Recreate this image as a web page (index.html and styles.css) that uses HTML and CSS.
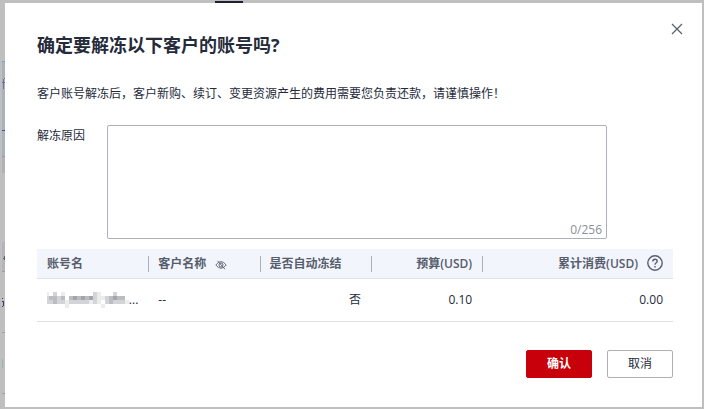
FILE: index.html
```html
<!DOCTYPE html>
<html lang="zh-CN">
<head>
    <meta charset="UTF-8">
    <meta name="viewport" content="width=device-width, initial-scale=1.0">
    <title>解冻客户账号</title>
    <link rel="stylesheet" href="styles.css">
</head>
<body>

    <!-- Page behind the dialog -->
    <svg class="backdrop" width="250" height="409" aria-hidden="true" shape-rendering="crispEdges">
        <rect x="215" y="1" width="28" height="2" fill="#1d2030"/>
        <rect x="2" y="61" width="3" height="96" fill="#a8b3be"/>
        <rect x="2" y="61" width="3" height="1" fill="#8c9cc8"/>
        <rect x="2" y="130" width="3" height="1" fill="#3c55b4"/>
        <rect x="2" y="156" width="3" height="1" fill="#8c9cc8"/>
        <rect x="2" y="157" width="3" height="16" fill="#b2b2b2"/>
        <path d="M3 79h1v10h-1zM4 78h1v1h-1zM2 82h3v1h-3z" fill="#7b6a9c"/>
        <rect x="2" y="242" width="3" height="29" fill="#b3b4bd"/>
        <rect x="2" y="271" width="3" height="1" fill="#9c9da6"/>
        <path d="M4 256h1v4h-1zM3 258h1v1h-1z" fill="#5d6070"/>
        <path d="M2 298h1v1h-1zM2 301h2v1h-2zM3 302h1v4h-1zM2 306h1v1h-1z" fill="#39415c"/>
        <rect x="2" y="332" width="3" height="1" fill="#9c9da6"/>
        <rect x="2" y="359" width="1" height="9" fill="#8ebab4"/>
        <rect x="2" y="393" width="3" height="1" fill="#9c9da6"/>
    </svg>

    <!-- Unfreeze Dialog -->
    <form class="dialog" role="dialog" aria-labelledby="title">
        <button type="button" class="close" aria-label="关闭">
            <svg width="12" height="12" viewBox="0 0 12 12"><path d="M1 1L11 11M11 1L1 11" fill="none" stroke="#575d6c" stroke-width="1.200"/></svg>
        </button>

        <h1 id="title">确定要解冻以下客户的账号吗?</h1>
        <p class="tip">客户账号解冻后，客户新购、续订、变更资源产生的费用需要您负责还款，请谨慎操作！</p>

        <div class="field">
            <label for="reason">解冻原因</label>
            <div class="reason-box">
                <textarea id="reason" maxlength="256"></textarea>
                <span class="counter">0/256</span>
            </div>
        </div>

        <table>
            <colgroup>
                <col class="col"><col class="col"><col class="col"><col class="col"><col>
            </colgroup>
            <thead>
                <tr>
                    <th>账号名</th>
                    <th>
                        <span class="head">客户名称
                            <svg width="12" height="12" viewBox="0 0 12 12" fill="none" stroke="#575d6c" stroke-width="0.900"><path d="M.800 7Q6 .200 11.200 7Q6 13.500 .800 7ZM2.500 2.800L10 11.200"/><circle cx="6" cy="7" r="2"/></svg>
                        </span>
                    </th>
                    <th>是否自动冻结</th>
                    <th class="num">预算(USD)</th>
                    <th class="num">
                        <span class="head">累计消费(USD)
                            <svg width="16" height="18" viewBox="0 0 16 18" fill="none" stroke="#575d6c" stroke-width="1.400"><circle cx="8" cy="8" r="7.200"/><path d="M5.800 6.500Q5.800 4.300 8 4.300T10.200 6.300Q10.200 7.300 9 8Q8 8.600 8 9.800M8 11V12.500"/></svg>
                        </span>
                    </th>
                </tr>
            </thead>
            <tbody>
                <tr>
                    <td>
                        <span class="account">
                            <!-- masked account name -->
                            <svg width="82" height="16" viewBox="2 0 82 16" role="img" aria-label="账号名已隐藏" shape-rendering="crispEdges">
                                <path d="M0 0h4v4h-4zM16 0h4v4h-4zM52 0h4v12h-4zM56 4h4v4h-4zM20 8h4v4h-4zM20 12h4v4h-4zM56 12h4v4h-4zM44 8h4v4h-4zM80 8h4v4h-4z" fill="#ececee"/>
                                <path d="M0 4h4v8h-4zM8 0h4v4h-4zM12 4h4v8h-4zM4 8h4v4h-4zM16 8h4v4h-4zM24 8h20v4h-20zM60 4h4v8h-4zM68 0h4v4h-4zM68 8h12v4h-12zM48 0h4v12h-4z" fill="#d3d4d8"/>
                                <path d="M4 4h4v4h-4zM8 4h4v8h-4zM16 4h4v4h-4zM24 4h4v4h-4zM32 4h4v4h-4zM40 4h4v4h-4zM64 4h4v8h-4zM72 4h4v4h-4zM76 4h4v4h-4z" fill="#bcbdc2"/>
                                <path d="M28 4h4v4h-4zM36 4h4v4h-4zM44 4h4v4h-4zM68 4h4v4h-4z" fill="#a4a5ab"/>
                            </svg>...
                        </span>
                    </td>
                    <td>--</td>
                    <td class="num">否</td>
                    <td class="num">0.10</td>
                    <td class="num">0.00</td>
                </tr>
            </tbody>
        </table>

        <div class="actions">
            <button type="submit" class="btn primary">确认</button>
            <button type="button" class="btn">取消</button>
        </div>
    </form>

</body>
</html>
```

FILE: styles.css
```css
* {
    margin: 0;
    padding: 0;
    box-sizing: border-box;
}

body {
    min-height: 100vh;
    padding: 3px 2px 2px 5px;
    display: flex;
    background-color: #bfbfbf;
    color: #252b3a;
    font-family: "Open Sans", "Noto Sans CJK SC", sans-serif;
    font-size: 12px;
    line-height: 18px;
}

button, textarea {
    font: inherit;
    color: inherit;
}

.backdrop {
    position: absolute;
    top: 0;
    left: 0;
}

.dialog {
    position: relative;
    flex: 1;
    padding: 28px 29px 28px 32px;
    background-color: #fff;
}

.close {
    position: absolute;
    top: 20px;
    right: 19px;
    width: 12px;
    height: 12px;
    border: none;
    background: none;
    cursor: pointer;
}

.close svg {
    display: block;
}

h1 {
    font-size: 18px;
    line-height: 28px;
    font-weight: 700;
}

.tip {
    margin-top: 26px;
}

.field {
    display: flex;
    margin-top: 22px;
}

.field label {
    width: 70px;
    padding-top: 2px;
}

.reason-box {
    position: relative;
    flex: 0 1 500px;
}

.reason-box textarea {
    display: block;
    width: 100%;
    height: 114px;
    padding: 8px;
    border: 1px solid #adb0b8;
    border-radius: 2px;
    resize: none;
    outline: none;
}

.counter {
    position: absolute;
    right: 5px;
    bottom: 0;
    color: #8a8e99;
}

table {
    width: 100%;
    margin-top: 10px;
    border-collapse: separate;
    border-spacing: 0;
    table-layout: fixed;
}

.col {
    width: 17.5%;
}

th, td {
    padding: 0 10px;
    text-align: left;
    border-bottom: 1px solid #dfe1e6;
}

th {
    height: 30px;
    color: #575d6c;
    font-weight: 600;
    background-color: #f2f5fc;
}

th + th {
    background-image: linear-gradient(#adb0b8, #adb0b8);
    background-size: 1px 16px;
    background-position: left center;
    background-repeat: no-repeat;
}

td {
    height: 43px;
}

.num {
    text-align: right;
}

.head {
    display: flex;
    align-items: center;
    gap: 9px;
}

.num .head {
    justify-content: flex-end;
}

.account {
    display: flex;
    align-items: center;
}

.actions {
    display: flex;
    justify-content: flex-end;
    gap: 15px;
    margin-top: 28px;
}

.btn {
    width: 66px;
    height: 28px;
    border: 1px solid #adb0b8;
    border-radius: 2px;
    background-color: #fff;
    cursor: pointer;
}

.primary {
    border-color: #c7000b;
    background-color: #c7000b;
    color: #fff;
    font-weight: 600;
}
```
